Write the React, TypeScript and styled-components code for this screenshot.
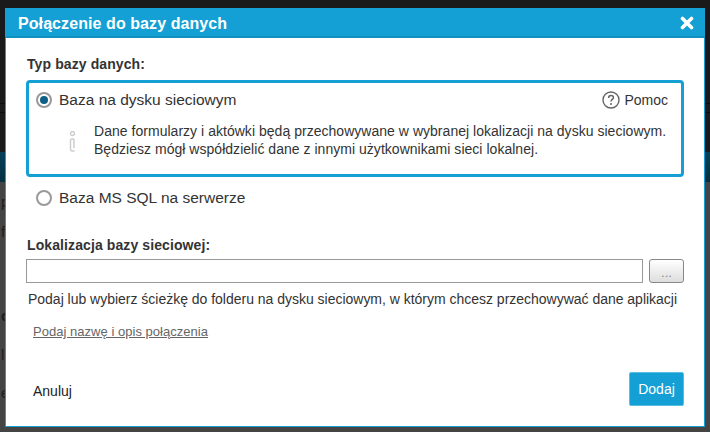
import React from 'react';
import styled, { createGlobalStyle } from 'styled-components';

const GlobalStyle = createGlobalStyle`
  html, body {
    margin: 0;
    padding: 0;
    background: #444;
    font-family: "Liberation Sans", Arial, sans-serif;
    overflow: hidden;
  }
`;

const Page = styled.div`
  position: relative;
  width: 710px;
  height: 432px;
  overflow: hidden;
  display: flex;
  flex-direction: column;
  background: #444;
`;

const TopBar = styled.div`
  height: 152px;
  flex: none;
  box-sizing: border-box;
  padding-top: 103px;
  background: #1a1a1a;
`;

const TopBarRule = styled.div`
  height: 8px;
  border-top: 1px solid #0c0c0c;
  border-bottom: 1px solid #0c0c0c;
`;

const Band = styled.div`
  height: 30px;
  flex: none;
  background: linear-gradient(#06405a, #04303f);
`;

const BackdropText = styled.div<{ $top: number; $bold?: boolean }>`
  margin-top: ${(p) => p.$top}px;
  padding-left: 1px;
  font-size: 15px;
  line-height: 16px;
  font-weight: ${(p) => (p.$bold ? 700 : 400)};
  color: #1c1c1c;
`;

const Dialog = styled.div`
  position: absolute;
  left: 5px;
  top: 8px;
  width: 700px;
  height: 419px;
  box-sizing: border-box;
  display: flex;
  flex-direction: column;
  background: #fff;
  border: 1px solid #14a0d4;
  border-top: 0;
`;

const Header = styled.div`
  height: 30px;
  box-sizing: border-box;
  flex: none;
  margin: 0 -1px;
  padding: 3px 11px 0 13px;
  display: flex;
  align-items: center;
  justify-content: space-between;
  background: #14a0d4;
  border-bottom: 2px solid #1291c0;
  color: #fff;
  font-size: 16px;
  font-weight: 700;
  letter-spacing: 0.08px;
`;

const CloseIcon = styled.svg`
  width: 14px;
  height: 14px;
  margin-top: -1px;
`;

const Body = styled.div`
  flex: 1;
  display: flex;
  flex-direction: column;
  padding: 16px 20px 20px;
  color: #333;
`;

const Label = styled.div`
  padding-left: 1px;
  font-size: 14px;
  font-weight: 700;
  line-height: 20px;
  letter-spacing: 0.1px;
  color: #333;
`;

const SelectedCard = styled.div`
  box-sizing: border-box;
  width: 658px;
  height: 97px;
  margin-top: 6px;
  padding: 0 7px;
  border: 3px solid #14a0d4;
  border-radius: 4px;
`;

const OptionRow = styled.div<{ $plain?: boolean }>`
  display: flex;
  align-items: center;
  gap: 7px;
  height: ${(p) => (p.$plain ? '30px' : '34px')};
  margin-top: ${(p) => (p.$plain ? '6px' : '0')};
  padding-left: ${(p) => (p.$plain ? '10px' : '0')};
  font-size: 15.5px;
  color: #333;
`;

const Radio = styled.span<{ $on?: boolean }>`
  box-sizing: border-box;
  flex: none;
  width: 16px;
  height: 16px;
  border-radius: 50%;
  border: 2px solid #999;
  padding: 2px;
  background: #fff;
  &::after {
    content: '';
    display: ${(p) => (p.$on ? 'block' : 'none')};
    width: 8px;
    height: 8px;
    border-radius: 50%;
    background: #0d5f85;
  }
`;

const HelpLink = styled.span`
  margin-left: auto;
  margin-right: 6px;
  display: flex;
  align-items: center;
  gap: 4px;
  font-size: 14px;
  color: #333;
`;

const Note = styled.div`
  display: flex;
  align-items: center;
  margin-top: 5px;
  padding-left: 33px;
`;

const NoteIcon = styled.svg`
  flex: none;
  width: 7px;
  height: 21px;
  margin: 3px 18px 0 0;
`;

const NoteText = styled.p`
  margin: 0;
  font-size: 14px;
  line-height: 18px;
  letter-spacing: 0.03px;
  white-space: nowrap;
  color: #333;
`;

const PathLabel = styled(Label)`
  margin-top: 22px;
`;

const PathRow = styled.div`
  display: flex;
  gap: 6px;
  margin-top: 4px;
`;

const PathInput = styled.div`
  box-sizing: border-box;
  width: 617px;
  height: 24px;
  border: 1px solid #999;
  background: #fff;
`;

const BrowseButton = styled.div`
  box-sizing: border-box;
  width: 35px;
  height: 24px;
  padding-top: 3px;
  display: flex;
  align-items: center;
  justify-content: center;
  border: 1px solid #888;
  border-radius: 3px;
  background: linear-gradient(#fff, #ddd);
  color: #888;
  font-size: 13px;
`;

const Hint = styled.div`
  margin-top: 7px;
  padding-left: 2px;
  font-size: 14px;
  line-height: 18px;
  letter-spacing: -0.015px;
  white-space: nowrap;
  color: #333;
`;

const DetailsLink = styled.a`
  align-self: flex-start;
  margin-top: 16px;
  margin-left: 7px;
  font-size: 13px;
  line-height: 16px;
  letter-spacing: 0.03px;
  color: #666;
  text-decoration: underline;
`;

const Footer = styled.div`
  margin-top: auto;
  display: flex;
  align-items: center;
  justify-content: space-between;
`;

const CancelButton = styled.span`
  margin-left: 7px;
  padding-top: 4px;
  font-size: 14px;
  color: #222;
`;

const AddButton = styled.div`
  box-sizing: border-box;
  width: 55px;
  height: 34px;
  display: flex;
  align-items: center;
  justify-content: center;
  background: #14a0d4;
  border: 1px solid #5bbde2;
  border-radius: 2px;
  color: #fff;
  font-size: 14px;
`;

export default function App() {
  return (
    <>
      <GlobalStyle />
      <Page>
        <TopBar>
          <TopBarRule />
        </TopBar>
        <Band />
        <BackdropText $top={12}>p</BackdropText>
        <BackdropText $top={14}>f</BackdropText>
        <BackdropText $top={68} $bold>c</BackdropText>
        <BackdropText $top={23}>l</BackdropText>
        <BackdropText $top={22}>e</BackdropText>
        <Dialog>
          <Header>
            <span>Połączenie do bazy danych</span>
            <CloseIcon viewBox="0 0 14 14">
              <path d="M2.5 2.5 L11.5 11.5 M11.5 2.5 L2.5 11.5" stroke="#fff" strokeWidth="3.6" strokeLinecap="round" />
            </CloseIcon>
          </Header>
          <Body>
            <Label>Typ bazy danych:</Label>
            <SelectedCard>
              <OptionRow>
                <Radio $on />
                <span>Baza na dysku sieciowym</span>
                <HelpLink>
                  <svg width="18" height="18" viewBox="0 0 18 18">
                    <circle cx="9" cy="9" r="8" fill="none" stroke="#666" strokeWidth="1.4" />
                    <path d="M6.6 7 C6.6 5.4 7.8 4.6 9 4.6 C10.4 4.6 11.4 5.5 11.4 6.7 C11.4 8.4 9 8.5 9 10.6" fill="none" stroke="#666" strokeWidth="1.5" />
                    <circle cx="9" cy="13" r="1" fill="#666" />
                  </svg>
                  Pomoc
                </HelpLink>
              </OptionRow>
              <Note>
                <NoteIcon viewBox="0 0 7 21">
                  <circle cx="3.5" cy="2.5" r="2" fill="none" stroke="#ccc" strokeWidth="1.4" />
                  <path d="M2 8 H5 M1.5 8 V18 Q1.5 20 3.5 20 H5.5 M5 8 V17" fill="none" stroke="#ccc" strokeWidth="1.4" />
                </NoteIcon>
                <NoteText>
                  Dane formularzy i aktówki będą przechowywane w wybranej lokalizacji na dysku sieciowym.
                  <br />
                  Będziesz mógł współdzielić dane z innymi użytkownikami sieci lokalnej.
                </NoteText>
              </Note>
            </SelectedCard>
            <OptionRow $plain>
              <Radio />
              <span>Baza MS SQL na serwerze</span>
            </OptionRow>
            <PathLabel>Lokalizacja bazy sieciowej:</PathLabel>
            <PathRow>
              <PathInput />
              <BrowseButton>...</BrowseButton>
            </PathRow>
            <Hint>Podaj lub wybierz ścieżkę do folderu na dysku sieciowym, w którym chcesz przechowywać dane aplikacji</Hint>
            <DetailsLink>Podaj nazwę i opis połączenia</DetailsLink>
            <Footer>
              <CancelButton>Anuluj</CancelButton>
              <AddButton>Dodaj</AddButton>
            </Footer>
          </Body>
        </Dialog>
      </Page>
    </>
  );
}
